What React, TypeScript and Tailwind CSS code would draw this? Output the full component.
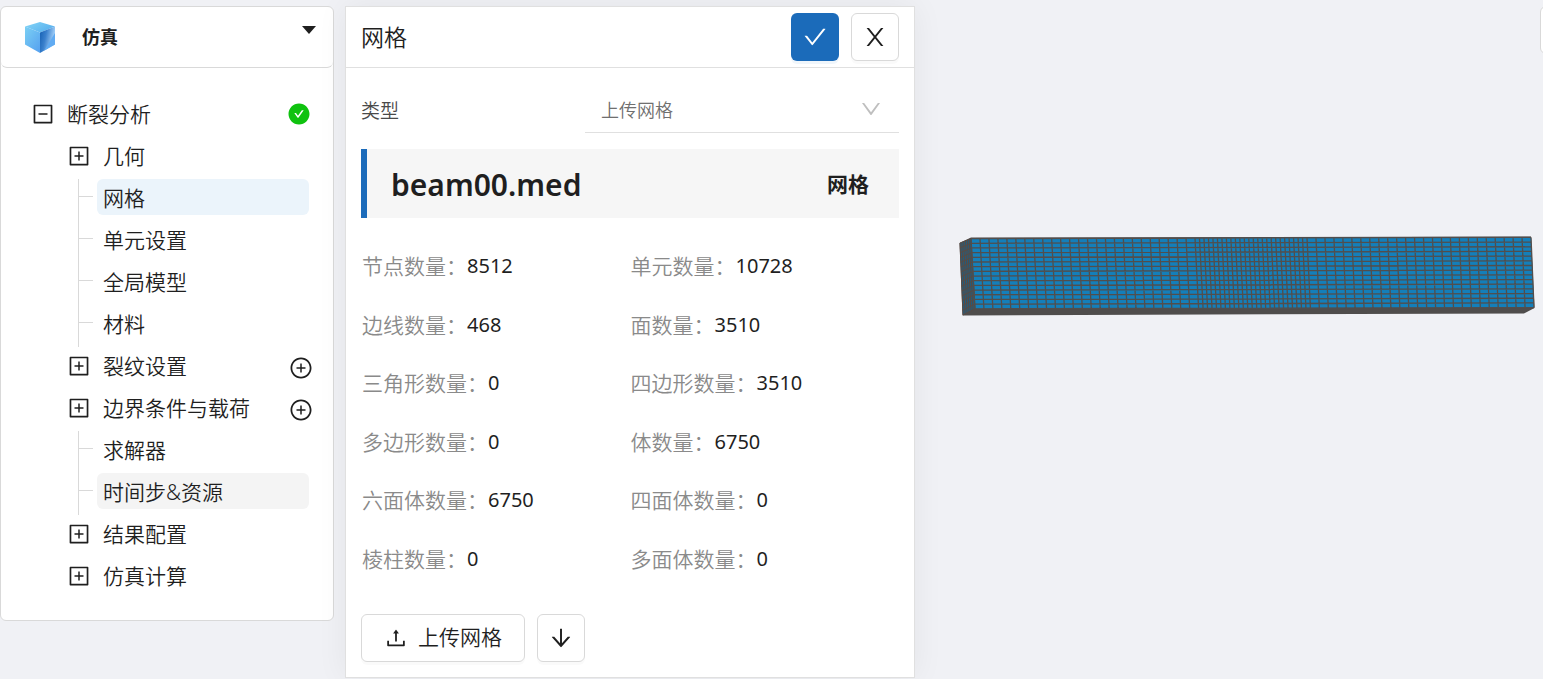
import { useState } from "react";
import type { ReactNode } from "react";
import {
  AiFillCheckCircle,
  AiOutlineArrowDown,
  AiOutlineCheck,
  AiOutlineDown,
  AiOutlineMinusSquare,
  AiOutlinePlusCircle,
  AiOutlinePlusSquare,
  AiOutlineUpload,
} from "react-icons/ai";

type TreeItem = {
  label: string;
  leaf?: boolean;
  addable?: boolean;
  tone?: "active" | "hover";
};

const treeItems: TreeItem[] = [
  { label: "几何" },
  { label: "网格", leaf: true, tone: "active" },
  { label: "单元设置", leaf: true },
  { label: "全局模型", leaf: true },
  { label: "材料", leaf: true },
  { label: "裂纹设置", addable: true },
  { label: "边界条件与载荷", addable: true },
  { label: "求解器", leaf: true },
  { label: "时间步&资源", leaf: true, tone: "hover" },
  { label: "结果配置" },
  { label: "仿真计算" },
];

const stats: [string, string][] = [
  ["节点数量", "8512"],
  ["单元数量", "10728"],
  ["边线数量", "468"],
  ["面数量", "3510"],
  ["三角形数量", "0"],
  ["四边形数量", "3510"],
  ["多边形数量", "0"],
  ["体数量", "6750"],
  ["六面体数量", "6750"],
  ["四面体数量", "0"],
  ["棱柱数量", "0"],
  ["多面体数量", "0"],
];

function CubeLogo() {
  return (
    <svg viewBox="0 0 30 32" className="h-8 w-[30px] shrink-0" aria-hidden="true">
      <defs>
        <linearGradient id="cube-top" x1="0" y1="0" x2="1" y2="0.6">
          <stop offset="0" stopColor="#86d6f7" />
          <stop offset="1" stopColor="#58b0ee" />
        </linearGradient>
        <linearGradient id="cube-left" x1="0" y1="0" x2="0.8" y2="1">
          <stop offset="0" stopColor="#7bd0f4" />
          <stop offset="1" stopColor="#58a4f0" />
        </linearGradient>
        <linearGradient id="cube-right" x1="0" y1="0.3" x2="1" y2="0.65">
          <stop offset="0" stopColor="#1c66b8" />
          <stop offset="0.35" stopColor="#3a80cd" />
          <stop offset="0.85" stopColor="#9fcdf7" />
          <stop offset="1" stopColor="#7db9f3" />
        </linearGradient>
      </defs>
      <path d="M15 1 30 5.5 15 11.5 0 5.5Z" fill="url(#cube-top)" />
      <path d="M0 5.5 15 11.5V32L0 23.5Z" fill="url(#cube-left)" />
      <path d="M30 5.5 15 11.5V32L30 23.5Z" fill="url(#cube-right)" />
      <path d="M30 12V23.5L19 29.7Z" fill="#61abf2" />
    </svg>
  );
}

function CloseIcon() {
  return (
    <svg viewBox="0 0 18 18" className="size-[18px]" fill="currentColor" aria-hidden="true">
      <path d="M0.6 0H3L9 7.4 15 0H17.4L10.2 9 17.4 18H15L9 10.6 3 18H0.6L7.8 9Z" />
    </svg>
  );
}

function IconButton({ label, children, primary = false }: { label: string; children: ReactNode; primary?: boolean }) {
  return (
    <button
      type="button"
      aria-label={label}
      className={
        primary
          ? "flex size-12 items-center justify-center rounded-md bg-[#1b6bba] text-white shadow-[0_3px_0_rgba(5,100,180,0.06)]"
          : "flex size-12 items-center justify-center rounded-md border border-[#d9d9d9] bg-white text-[#1f1f1f] shadow-[0_3px_0_rgba(0,0,0,0.02)]"
      }
    >
      {children}
    </button>
  );
}

function TreeRow({ item }: { item: TreeItem }) {
  const title =
    item.tone === "active" ? "bg-[#ebf4fb]" : item.tone === "hover" ? "bg-[#f4f4f4]" : "";
  return (
    <li className="flex h-[42px] items-start">
      {item.leaf ? (
        <span className="ml-[17px] flex h-full w-[19px] shrink-0 border-l border-[#d9d9d9]">
          <span className="mt-[17px] h-px w-[14px] bg-[#d9d9d9]" />
        </span>
      ) : (
        <button type="button" aria-label={`展开${item.label}`} className="flex h-[38px] w-9 shrink-0 items-center justify-center">
          <AiOutlinePlusSquare className="size-6" />
        </button>
      )}
      <span className={`flex h-9 flex-1 items-center rounded-md px-1.5 pt-0.5 ${title}`}>{item.label}</span>
      {item.addable && (
        <button type="button" aria-label={`添加${item.label}`} className="-mr-1 flex h-[42px] items-center">
          <AiOutlinePlusCircle className="size-6" />
        </button>
      )}
    </li>
  );
}

function Sidebar() {
  return (
    <aside className="flex w-[334px] shrink-0 flex-col self-start rounded-md border border-[#d9d9d9] bg-white">
      <header className="flex h-[61px] items-center rounded-md border-b border-[#d9d9d9] pr-[17px] pl-6">
        <CubeLogo />
        <strong className="ml-[27px] flex-1 text-lg font-bold">仿真</strong>
        <button type="button" aria-label="切换模块" className="mb-3.5">
          <svg viewBox="0 0 14 8" className="h-2 w-3.5" aria-hidden="true">
            <path d="M0 0H14L7 8Z" fill="#1f1f1f" />
          </svg>
        </button>
      </header>
      <nav className="pt-[27px] pr-6 pb-[21px] pl-6 text-[21px] leading-9 font-[350]">
        <div className="flex h-[42px] items-start">
          <button type="button" aria-label="收起断裂分析" className="flex h-[38px] w-9 shrink-0 items-center justify-center">
            <AiOutlineMinusSquare className="size-6" />
          </button>
          <span className="flex h-9 flex-1 items-center px-1.5 pt-0.5">断裂分析</span>
          <span className="-mr-0.5 flex h-[38px] items-center text-[#0fc20f]">
            <AiFillCheckCircle className="size-6" />
          </span>
        </div>
        <ul className="pl-9">
          {treeItems.map((item) => (
            <TreeRow key={item.label} item={item} />
          ))}
        </ul>
      </nav>
    </aside>
  );
}

function MeshPanel() {
  const [kind, setKind] = useState("upload");
  return (
    <section className="w-[570px] shrink-0 self-start border border-[#e0e0e0] bg-white shadow-[0_0_30px_rgba(0,0,20,0.06)]">
      <header className="flex h-[61px] items-center justify-between border-b border-[#e0e0e0] px-[15px]">
        <h2 className="text-[23px] leading-9 font-[350]">网格</h2>
        <div className="flex gap-3">
          <IconButton label="确认" primary>
            <AiOutlineCheck className="size-[26px]" />
          </IconButton>
          <IconButton label="关闭">
            <CloseIcon />
          </IconButton>
        </div>
      </header>
      <div className="px-[15px] pt-[17px] pb-[15px]">
        <div className="flex items-center justify-between">
          <label htmlFor="mesh-kind" className="pt-1 text-[19px] font-[350] text-[#4a4a4a]">
            类型
          </label>
          <div className="grid w-[314px] items-center border-b border-[#e0e0e0]">
            <select
              id="mesh-kind"
              value={kind}
              onChange={(e) => setKind(e.target.value)}
              className="col-start-1 row-start-1 h-[47px] w-full appearance-none bg-transparent px-4 pt-0.5 text-lg font-[350] text-[#6f6f6f]"
            >
              <option value="upload">上传网格</option>
            </select>
            <AiOutlineDown className="pointer-events-none col-start-1 row-start-1 mr-4 size-6 justify-self-end text-[#bfbfbf]" />
          </div>
        </div>
        <div className="mt-4 flex h-[69px] items-center justify-between border-l-6 border-[#1b6bba] bg-[#f6f6f6] pt-0.5 pr-[30px] pl-6">
          <span className="text-[30px] leading-10 font-semibold">beam00.med</span>
          <strong className="text-[21px] font-bold">网格</strong>
        </div>
        <dl className="mt-[19px] grid h-[351px] grid-cols-2 grid-rows-6 items-center pl-px text-[21px] leading-9">
          {stats.map(([name, value]) => (
            <div key={name} className="flex items-center">
              <dt className="font-[350] text-[#8a8a8a]">{name}：</dt>
              <dd className="text-xl">{value}</dd>
            </div>
          ))}
        </dl>
        <div className="mt-[26px] flex gap-3">
          <button
            type="button"
            className="flex h-12 items-center gap-2.5 rounded-md border border-[#d9d9d9] bg-white px-[22px] text-[21px] font-[350] shadow-[0_3px_0_rgba(0,0,0,0.02)]"
          >
            <AiOutlineUpload className="size-6" />
            上传网格
          </button>
          <IconButton label="下载">
            <AiOutlineArrowDown className="size-[26px]" />
          </IconButton>
        </div>
      </div>
    </section>
  );
}

type Point = [number, number];

const mix = (a: Point, b: Point, t: number): Point => [a[0] + (b[0] - a[0]) * t, a[1] + (b[1] - a[1]) * t];

/* Grid lines of a four-cornered face, at the given column and row fractions. */
function facePath(tl: Point, tr: Point, br: Point, bl: Point, cols: number[], rows: number[]) {
  const lines = [
    ...cols.map((t) => [mix(tl, tr, t), mix(bl, br, t)]),
    ...rows.map((t) => [mix(tl, bl, t), mix(tr, br, t)]),
  ];
  return lines.map(([a, b]) => `M${a[0].toFixed(2)} ${a[1].toFixed(2)}L${b[0].toFixed(2)} ${b[1].toFixed(2)}`).join("");
}

const steps = (n: number) => Array.from({ length: n + 1 }, (_, i) => i / n);

/* 25 coarse, 25 fine and 25 coarse columns along the beam. */
const frontCols = Array.from({ length: 76 }, (_, i) => {
  if (i <= 25) return (i / 25) * 0.4;
  if (i <= 50) return 0.4 + ((i - 25) / 25) * 0.2;
  return 0.6 + ((i - 50) / 25) * 0.4;
});

const frontLines = facePath([12, 2.6], [572, 1.4], [575, 71.6], [16, 72.8], frontCols, steps(15));
const sideLines = facePath([1, 7], [12, 2.6], [16, 72.8], [4, 79], steps(6), steps(15));

function BeamView() {
  return (
    <svg viewBox="0 0 576 82" className="h-[82px] w-[576px]" role="img" aria-label="beam00.med">
      <path d="M0.5 7 12 1.6 572 0.4 575.5 72 565 77.4 3.5 79.4Z" fill="#4f4d4c" />
      <path d="M12 2.6 572 1.4 575 71.6 16 72.8Z" fill="#147fba" />
      <path d="M1 7 12 2.6 16 72.8 4 79Z" fill="#205e80" />
      <path d={sideLines} stroke="#5a4a42" strokeWidth="1" fill="none" />
      <path d={frontLines} stroke="#524e4c" strokeWidth="1.3" fill="none" />
    </svg>
  );
}

export default function App() {
  return (
    <div className="relative flex min-h-screen items-stretch gap-[11px] overflow-hidden bg-[#f0f1f5] pt-1.5 font-['Noto_Sans','Noto_Sans_CJK_SC',sans-serif] text-[#1f1f1f]">
      <Sidebar />
      <MeshPanel />
      <main className="flex min-w-0 flex-1 items-start pt-[230px] pl-[33px]">
        <BeamView />
      </main>
      <button
        type="button"
        aria-label="视图工具"
        className="absolute top-1.5 -right-[45px] size-12 rounded-md border border-[#d9d9d9] bg-white"
      />
    </div>
  );
}
